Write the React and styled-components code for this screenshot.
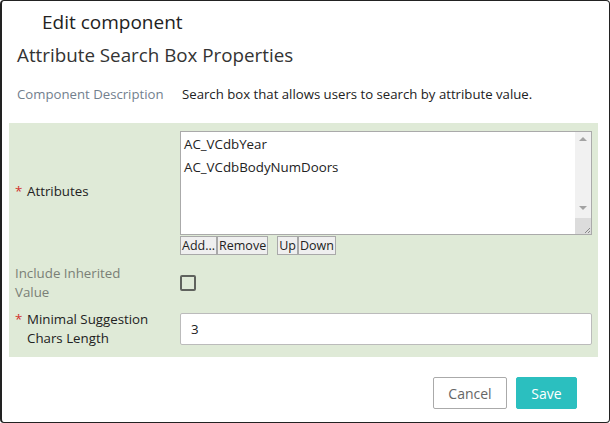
import React, { useState } from 'react';
import styled, { createGlobalStyle } from 'styled-components';

const Global = createGlobalStyle`
    body {
        margin: 0;
        background: #fff;
        font-family: 'Open Sans', 'Noto Sans', sans-serif;
    }
`;

const Dialog = styled.div`
    box-sizing: border-box;
    width: 610px;
    height: 423px;
    border: 1px solid #222;
    border-left-width: 2px;
    border-radius: 4px;
    background: #fff;
    display: flex;
    flex-direction: column;
    overflow: hidden;
`;

const Title = styled.h1`
    margin: 8px 0 0 40px;
    font-size: 19px;
    font-weight: 400;
    color: #222;
    line-height: 26px;
`;

const SubTitle = styled.h2`
    margin: 7px 0 0 15px;
    font-size: 18.8px;
    font-weight: 400;
    color: #333;
    line-height: 26px;
`;

const DescRow = styled.div`
    display: flex;
    margin: 16px 0 0 15px;
    font-size: 13.2px;
    line-height: 20px;
`;

const DescLabel = styled.div`
    width: 165px;
    color: #72808e;
`;

const DescValue = styled.div`
    color: #222;
`;

const Panel = styled.div`
    margin: 19px 11px 0 7px;
    background: #dfead7;
    padding: 8px 6px 9px 6px;
    display: flex;
    flex-direction: column;
`;

const Row = styled.div`
    display: grid;
    grid-template-columns: 165px 1fr;
    align-items: center;
    margin-top: ${p => p.$top || 0}px;
`;

const Label = styled.div`
    font-size: 13.3px;
    line-height: 19px;
    color: ${p => (p.$muted ? '#7a7f76' : '#222')};
    display: flex;
    margin-bottom: ${p => p.$lift || 0}px;
`;

const Star = styled.span`
    color: #d2322d;
    width: 12px;
    flex: none;
`;

const ListWrap = styled.div`
    display: flex;
    flex-direction: column;
`;

const ListBox = styled.div`
    box-sizing: border-box;
    height: 104px;
    border: 1px solid #aaa;
    background: #fff;
    display: flex;
`;

const ListItems = styled.div`
    flex: 1;
    padding: 1px 3px;
    font-size: 13.3px;
    line-height: 23px;
    color: #222;
`;

const Scroll = styled.div`
    width: 16px;
    background: #f1f1f1;
    display: flex;
    flex-direction: column;
    align-items: center;
    padding: 5px 0 0;
`;

const Gap = styled.div`
    flex: ${p => (p.$grow ? 1 : 'none')};
    height: ${p => p.$h || 0}px;
`;

const Arrow = styled.div`
    width: 0;
    height: 0;
    border-left: 4px solid transparent;
    border-right: 4px solid transparent;
    ${p => (p.$down ? 'border-top: 4px solid #a3a3a3;' : 'border-bottom: 4px solid #a3a3a3;')}
`;

const Corner = styled.div`
    width: 16px;
    height: 16px;
    background: #dcdcdc;
    display: flex;
    align-items: flex-end;
    justify-content: flex-end;
`;

const ButtonBar = styled.div`
    display: flex;
    margin-top: 1px;
`;

const SmallBtn = styled.button`
    font-family: 'Open Sans', 'Noto Sans', sans-serif;
    font-size: 12.5px;
    line-height: 16px;
    padding: 0 1px;
    height: 19px;
    margin: 0 ${p => p.$gap || 0}px 0 0;
    border: 1px solid #a9a9a9;
    background: #efefef;
    color: #222;
    border-radius: 0;
`;

const CheckBox = styled.div`
    box-sizing: border-box;
    width: 16px;
    height: 16px;
    border: 2px solid #5f625d;
    border-radius: 2px;
`;

const TextInput = styled.input`
    box-sizing: border-box;
    width: 100%;
    height: 32px;
    border: 1px solid #bbb;
    border-radius: 2px;
    padding: 0 10px;
    font-family: 'Open Sans', 'Noto Sans', sans-serif;
    font-size: 13.3px;
    color: #222;
    outline: none;
`;

const Footer = styled.div`
    display: flex;
    justify-content: flex-end;
    gap: 9px;
    margin: 20px 32px 0 0;
`;

const Btn = styled.button`
    box-sizing: border-box;
    height: 32px;
    width: ${p => p.$w}px;
    border-radius: 2px;
    font-family: 'Open Sans', 'Noto Sans', sans-serif;
    font-size: 14px;
    border: 1px solid ${p => (p.$primary ? '#2bbfbf' : '#aaa')};
    background: ${p => (p.$primary ? '#2bbfbf' : '#fff')};
    color: ${p => (p.$primary ? '#fff' : '#666')};
`;

const App = () => {
    const [len, setLen] = useState('3');

    return (
        <>
            <Global />
            <Dialog>
                <Title>Edit component</Title>
                <SubTitle>Attribute Search Box Properties</SubTitle>
                <DescRow>
                    <DescLabel>Component Description</DescLabel>
                    <DescValue>Search box that allows users to search by attribute value.</DescValue>
                </DescRow>
                <Panel>
                    <Row>
                        <Label $lift={4}><Star>*</Star>Attributes</Label>
                        <ListWrap>
                            <ListBox>
                                <ListItems>
                                    <div>AC_VCdbYear</div>
                                    <div>AC_VCdbBodyNumDoors</div>
                                </ListItems>
                                <Scroll>
                                    <Arrow />
                                    <Gap $grow />
                                    <Arrow $down />
                                    <Gap $h={8} />
                                    <Corner>
                                        <svg width="8" height="8" viewBox="0 0 8 8">
                                            <path d="M7 2 L2 7 M7 5 L5 7" stroke="#888" strokeWidth="1" />
                                        </svg>
                                    </Corner>
                                </Scroll>
                            </ListBox>
                            <ButtonBar>
                                <SmallBtn>Add...</SmallBtn>
                                <SmallBtn $gap={9}>Remove</SmallBtn>
                                <SmallBtn>Up</SmallBtn>
                                <SmallBtn>Down</SmallBtn>
                            </ButtonBar>
                        </ListWrap>
                    </Row>
                    <Row $top={9}>
                        <Label $muted>Include Inherited<br />Value</Label>
                        <CheckBox />
                    </Row>
                    <Row $top={8}>
                        <Label><Star>*</Star>Minimal Suggestion<br />Chars Length</Label>
                        <TextInput value={len} onChange={e => setLen(e.target.value)} />
                    </Row>
                </Panel>
                <Footer>
                    <Btn $w={74}>Cancel</Btn>
                    <Btn $primary $w={61}>Save</Btn>
                </Footer>
            </Dialog>
        </>
    );
};

export default App;
